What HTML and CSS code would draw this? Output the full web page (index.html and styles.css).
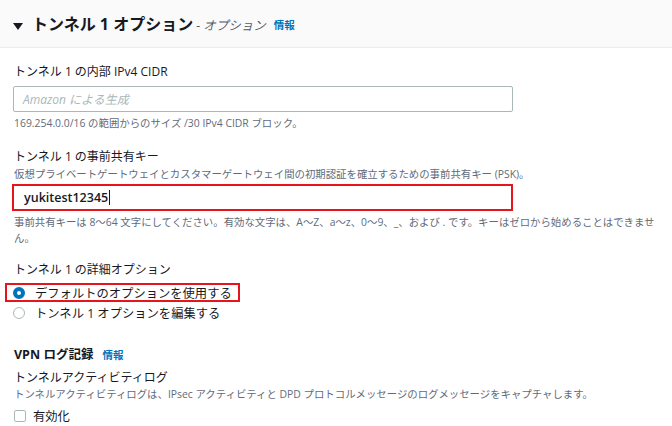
FILE: index.html
```html
<!DOCTYPE html>
<html lang="ja">
<head>
<meta charset="utf-8">
<link rel="stylesheet" href="styles.css">
</head>
<body>
<div class="header">
  <svg class="caret" width="10" height="7" viewBox="0 0 10 7"><polygon points="0,0 10,0 5,7" fill="#16191f"/></svg>
  <span class="title">トンネル 1 オプション</span>
  <span class="subtitle">- オプション</span>
  <a class="info">情報</a>
</div>
<div class="content">
  <div class="label">トンネル 1 の内部 IPv4 CIDR</div>
  <div class="input input1"><span class="placeholder">Amazon による生成</span></div>
  <div class="hint">169.254.0.0/16 の範囲からのサイズ /30 IPv4 CIDR ブロック。</div>

  <div class="label field2">トンネル 1 の事前共有キー</div>
  <div class="desc">仮想プライベートゲートウェイとカスタマーゲートウェイ間の初期認証を確立するための事前共有キー (PSK)。</div>
  <div class="input input2"><span class="value">yukitest12345</span><span class="cursor"></span></div>
  <div class="hint hint2">事前共有キーは 8〜64 文字にしてください。有効な文字は、A〜Z、a〜z、0〜9、_、および . です。キーはゼロから始めることはできません。</div>

  <div class="label field3">トンネル 1 の詳細オプション</div>
  <div class="radios">
    <div class="radio-row selected-box"><span class="radio on"></span><span class="radio-text">デフォルトのオプションを使用する</span></div>
    <div class="radio-row"><span class="radio"></span><span class="radio-text">トンネル 1 オプションを編集する</span></div>
  </div>

  <div class="section-title">VPN ログ記録 <a class="info">情報</a></div>
  <div class="label field4">トンネルアクティビティログ</div>
  <div class="desc desc4">トンネルアクティビティログは、IPsec アクティビティと DPD プロトコルメッセージのログメッセージをキャプチャします。</div>
  <div class="check-row"><span class="checkbox"></span><span class="check-text">有効化</span></div>
</div>
</body>
</html>
```
FILE: styles.css
```css
html, body {
  margin: 0;
  padding: 0;
  background: #ffffff;
}
body {
  font-family: "Open Sans", "Noto Sans CJK JP", sans-serif;
  color: #16191f;
  width: 672px;
  overflow: hidden;
}
.header {
  height: 47px;
  background: #fafafa;
  border-bottom: 1px solid #eaeded;
  display: flex;
  align-items: center;
  padding-left: 13px;
}
.caret {
  margin-top: 5px;
  margin-right: 9px;
}
.title {
  font-size: 16px;
  font-weight: 700;
  line-height: 20px;
}
.subtitle {
  font-size: 12.5px;
  font-style: italic;
  color: #545b64;
  margin-left: 3px;
  margin-top: 2px;
}
.info {
  font-size: 10.5px;
  font-weight: 700;
  color: #0073bb;
  margin-left: 8px;
  margin-top: 1px;
}
.content {
  padding: 16px 2px 0 13px;
}
.label {
  font-size: 12px;
  line-height: 16px;
  padding-left: 1px;
  color: #16191f;
}
.input {
  box-sizing: border-box;
  width: 500px;
  height: 26px;
  border: 1px solid #aab7b8;
  border-radius: 2px;
  display: flex;
  align-items: center;
  background: #fff;
}
.input1 {
  margin-top: 6px;
  padding-left: 9px;
}
.placeholder {
  font-size: 12px;
  font-style: italic;
  color: #aab7b8;
}
.hint {
  margin-top: 4px;
  font-size: 10.4px;
  line-height: 14px;
  color: #5f6b7a;
  padding-left: 1px;
}
.field2 {
  margin-top: 19px;
}
.desc {
  margin-top: 2px;
  font-size: 10.4px;
  line-height: 14px;
  color: #5f6b7a;
  padding-left: 1px;
}
.input2 {
  margin-top: 3px;
  margin-left: -1px;
  width: 501px;
  height: 27px;
  border: 2px solid #e8141b;
  border-radius: 0;
  padding-left: 10px;
}
.value {
  font-size: 12.5px;
  font-weight: 600;
  color: #16191f;
}
.cursor {
  display: inline-block;
  width: 1px;
  height: 15px;
  background: #16191f;
  margin-left: 1px;
}
.hint2 {
  margin-top: 3px;
  line-height: 16px;
}
.field3 {
  margin-top: 16px;
}
.radios {
  margin-top: 5px;
  display: flex;
  flex-direction: column;
  align-items: flex-start;
}
.radio-row {
  display: flex;
  align-items: center;
  height: 21px;
}
.selected-box {
  box-sizing: border-box;
  height: 19px;
  border: 2px solid #e8141b;
  margin-left: -8px;
  padding: 0 6px;
}
.radio {
  box-sizing: border-box;
  width: 12px;
  height: 12px;
  border-radius: 50%;
  border: 1px solid #aab7b8;
  background: #fff;
  flex: none;
}
.radio.on {
  border: 4px solid #0073bb;
}
.radio-text {
  font-size: 12.3px;
  margin-left: 10px;
  color: #16191f;
}
.section-title {
  margin-top: 23px;
  font-size: 12.5px;
  line-height: 16px;
  font-weight: 700;
  padding-left: 1px;
  display: flex;
  align-items: center;
}
.section-title .info {
  margin-left: 9px;
}
.field4 {
  margin-top: 7px;
}
.desc4 {
  margin-top: 1px;
}
.check-row {
  margin-top: 6px;
  height: 18px;
  display: flex;
  align-items: center;
  padding-left: 1px;
}
.checkbox {
  box-sizing: border-box;
  width: 12px;
  height: 12px;
  border: 1px solid #aab7b8;
  border-radius: 2px;
  flex: none;
}
.check-text {
  font-size: 12.3px;
  margin-left: 7px;
}
```
